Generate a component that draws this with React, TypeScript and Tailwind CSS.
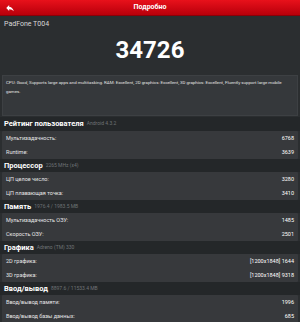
const sections = [
  {
    title: "Рейтинг пользователя",
    sub: "Android 4.3.2",
    rows: [
      { label: "Мультизадачность:", value: "6768" },
      { label: "Runtime:", value: "3639" },
    ],
  },
  {
    title: "Процессор",
    sub: "2265 MHz (x4)",
    rows: [
      { label: "ЦП целое число:", value: "3280" },
      { label: "ЦП плавающая точка:", value: "3410" },
    ],
  },
  {
    title: "Память",
    sub: "1976.4 / 1983.5 MB",
    rows: [
      { label: "Мультизадачность ОЗУ:", value: "1485" },
      { label: "Скорость ОЗУ:", value: "2501" },
    ],
  },
  {
    title: "Графика",
    sub: "Adreno (TM) 330",
    rows: [
      { label: "2D графика:", value: "[1200x1848] 1644" },
      { label: "3D графика:", value: "[1200x1848] 9318" },
    ],
  },
  {
    title: "Ввод/вывод",
    sub: "8897.6 / 11533.4 MB",
    rows: [
      { label: "Ввод/вывод памяти:", value: "1996" },
      { label: "Ввод/вывод базы данных:", value: "685" },
    ],
  },
];

function BackIcon() {
  return (
    <svg viewBox="0 0 24 24" className="h-[10px] w-[10px]" fill="white">
      <path d="M10 9V5l-7 7 7 7v-4.1c5 0 8.5 1.6 11 5.1-1-5-4-10-11-11z" />
    </svg>
  );
}

export default function App() {
  return (
    <div
      className="w-[300px] h-[322px] overflow-hidden bg-[#2b2e30] text-white"
      style={{ fontFamily: "Roboto, 'Liberation Sans', sans-serif" }}
    >
      <div className="h-[16px] grid grid-cols-[1fr_auto_1fr] items-center bg-gradient-to-b from-[#e8111b] to-[#b8000a] border-b border-[#8a0008]">
        <div className="pl-[5px] flex items-center">
          <BackIcon />
        </div>
        <div className="text-[7px] font-bold leading-none">Подробно</div>
        <div />
      </div>

      <div className="h-[16px] px-[4px] flex items-center text-[7px] text-[#d8d8d8]">PadFone T004</div>

      <div className="h-[36px] flex items-center justify-center text-[24px] font-bold leading-none">34726</div>

      <div className="mt-[7px] mx-[2px] h-[41px] bg-[#35383b] border border-[#3d4043] px-[3px] pt-[2px] text-[4.4px] leading-[9px] text-[#e2e2e2]">
        CPU: Good, Supports large apps and multitasking. RAM: Excellent, 2D graphics: Excellent, 3D graphics: Excellent, Fluently support large mobile games.
      </div>

      <div className="mt-[1px]">
        {sections.map((s, i) => (
          <div key={i}>
            <div className={`${i === 0 ? "h-[14px]" : "h-[13px]"} px-[4px] flex items-center gap-[3px] bg-[#242729]`}>
              <span className="text-[7.5px] font-bold text-white">{s.title}</span>
              <span className="text-[5px] text-[#6f7376]">{s.sub}</span>
            </div>
            <div className="mx-[2px] bg-[#37393c] rounded-[1px]">
              {s.rows.map((r, j) => (
                <div key={j} className="h-[14px] px-[4px] flex items-center justify-between text-[5.5px] text-[#e6e6e6]">
                  <span>{r.label}</span>
                  <span className="text-white">{r.value}</span>
                </div>
              ))}
            </div>
          </div>
        ))}
      </div>
    </div>
  );
}
